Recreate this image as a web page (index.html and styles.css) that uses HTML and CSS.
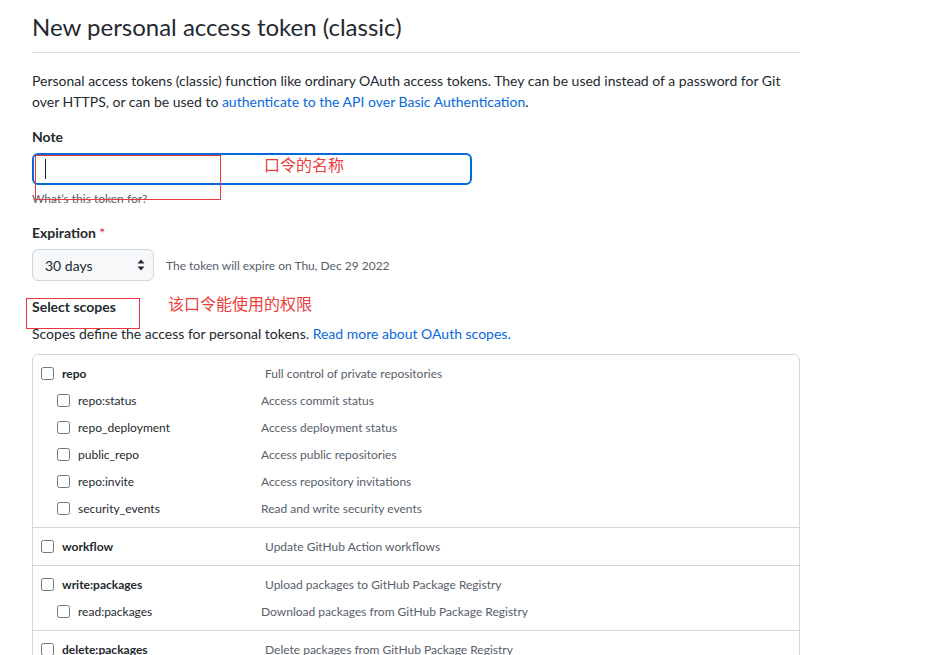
FILE: index.html
```html
<!DOCTYPE html>
<html>
<head>
<meta charset="utf-8">
<link rel="stylesheet" href="styles.css">
</head>
<body>
<div class="page">
  <h1 class="title">New personal access token (classic)</h1>
  <p class="intro">Personal access tokens (classic) function like ordinary OAuth access tokens. They can be used instead of a password for Git over HTTPS, or can be used to <a class="link" href="#">authenticate to the API over Basic Authentication</a>.</p>

  <div class="field">
    <div class="label">Note</div>
    <div class="input"><span class="caret"></span></div>
    <div class="hint">What’s this token for?</div>
  </div>

  <div class="field field-exp">
    <div class="label">Expiration <span class="req">*</span></div>
    <div class="exp-row">
      <div class="select">
        <span>30 days</span>
        <svg class="arrows" width="8" height="12" viewBox="0 0 8 12"><path d="M4 0.5 L7.5 4.5 H0.5 Z M4 11.5 L7.5 7.5 H0.5 Z" fill="#24292f"/></svg>
      </div>
      <span class="exp-note">The token will expire on Thu, Dec 29 2022</span>
    </div>
  </div>

  <div class="scopes-head">
    <div class="label">Select scopes</div>
    <p class="scopes-desc">Scopes define the access for personal tokens. <a class="link" href="#">Read more about OAuth scopes.</a></p>
  </div>

  <div class="table">
    <div class="group">
      <div class="row top"><input type="checkbox"><span class="name">repo</span><span class="desc">Full control of private repositories</span></div>
      <div class="row sub"><input type="checkbox"><span class="name">repo:status</span><span class="desc">Access commit status</span></div>
      <div class="row sub"><input type="checkbox"><span class="name">repo_deployment</span><span class="desc">Access deployment status</span></div>
      <div class="row sub"><input type="checkbox"><span class="name">public_repo</span><span class="desc">Access public repositories</span></div>
      <div class="row sub"><input type="checkbox"><span class="name">repo:invite</span><span class="desc">Access repository invitations</span></div>
      <div class="row sub"><input type="checkbox"><span class="name">security_events</span><span class="desc">Read and write security events</span></div>
    </div>
    <div class="group">
      <div class="row top"><input type="checkbox"><span class="name">workflow</span><span class="desc">Update GitHub Action workflows</span></div>
    </div>
    <div class="group">
      <div class="row top"><input type="checkbox"><span class="name">write:packages</span><span class="desc">Upload packages to GitHub Package Registry</span></div>
      <div class="row sub"><input type="checkbox"><span class="name">read:packages</span><span class="desc">Download packages from GitHub Package Registry</span></div>
    </div>
    <div class="group">
      <div class="row top"><input type="checkbox"><span class="name">delete:packages</span><span class="desc">Delete packages from GitHub Package Registry</span></div>
    </div>
  </div>
</div>

<div class="anno-box box1"></div>
<div class="anno-text text1">口令的名称</div>
<div class="anno-box box2"></div>
<div class="anno-text text2">该口令能使用的权限</div>
</body>
</html>
```

FILE: styles.css
```css
html, body {
  margin: 0;
  padding: 0;
  background: #ffffff;
}
body {
  font-family: Lato, "Liberation Sans", "Noto Sans CJK SC", sans-serif;
  color: #24292f;
  font-size: 14px;
  line-height: 21px;
  height: 655px;
  overflow: hidden;
  position: relative;
}
.page {
  width: 768px;
  padding: 9px 0 0 32px;
}
.title {
  margin: 0;
  font-size: 24px;
  font-weight: 400;
  line-height: 36px;
  padding-bottom: 7px;
  border-bottom: 1px solid #d8dee4;
}
.intro {
  margin: 17px 0 0;
}
.link {
  color: #0969da;
  text-decoration: none;
}
.field {
  margin-top: 14px;
}
.label {
  font-weight: 700;
}
.input {
  margin-top: 6px;
  width: 425px;
  height: 28px;
  border: 2px solid #0969da;
  border-radius: 6px;
  display: flex;
  align-items: center;
  padding-left: 11px;
}
.caret {
  width: 1px;
  height: 20px;
  background: #24292f;
}
.hint {
  margin-top: 5px;
  font-size: 12px;
  line-height: 18px;
  color: #57606a;
}
.field-exp {
  margin-top: 14px;
}
.req {
  color: #cf222e;
  font-weight: 400;
}
.exp-row {
  margin-top: 6px;
  display: flex;
  align-items: center;
  gap: 12px;
}
.select {
  box-sizing: border-box;
  width: 122px;
  height: 32px;
  border: 1px solid #d0d7de;
  border-radius: 6px;
  background: #f6f8fa;
  display: flex;
  align-items: center;
  justify-content: space-between;
  padding: 0 8px 0 12px;
}
.arrows {
  display: block;
}
.exp-note {
  font-size: 12px;
  color: #57606a;
}
.scopes-head {
  margin-top: 15px;
}
.scopes-desc {
  margin: 6px 0 0;
}
.table {
  margin-top: 10px;
  border: 1px solid #d0d7de;
  border-radius: 6px;
}
.group {
  padding: 5px 0;
  border-top: 1px solid #d0d7de;
}
.group:first-child {
  border-top: 0;
}
.row {
  display: flex;
  align-items: center;
  height: 27px;
  font-size: 12px;
}
.row input {
  margin: 0 8px 0 0;
  width: 13px;
  height: 13px;
}
.row.top {
  padding-left: 8px;
}
.row.top .name {
  font-weight: 700;
  width: 203px;
}
.row.sub {
  padding-left: 24px;
}
.row.sub .name {
  width: 183px;
}
.desc {
  color: #57606a;
}
.anno-box {
  position: absolute;
  border: 1px solid #e8383d;
  box-sizing: border-box;
}
.box1 {
  left: 35px;
  top: 155px;
  width: 186px;
  height: 45px;
}
.box2 {
  left: 26px;
  top: 298px;
  width: 114px;
  height: 31px;
}
.anno-text {
  position: absolute;
  color: #ee3d3d;
  font-family: "Noto Sans CJK SC", sans-serif;
  font-size: 16px;
  line-height: 16px;
}
.text1 {
  left: 264px;
  top: 156px;
}
.text2 {
  left: 168px;
  top: 295px;
}
```
